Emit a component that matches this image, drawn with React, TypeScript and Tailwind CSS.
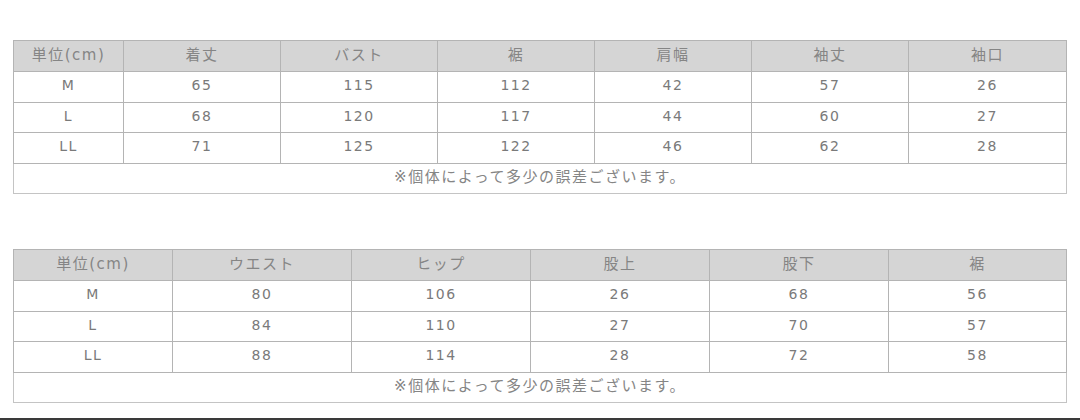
import React from 'react';

const NOTE = '※個体によって多少の誤差ございます。';

type TableProps = {
  head: string[];
  rows: (string | number)[][];
  cols: number[];
};

const SizeTable = ({ head, rows, cols }: TableProps) => {
  return (
    <table className="table-fixed border-collapse w-[1053px] border border-[#c4c4c4]">
      <colgroup>
        {cols.map((w, i) => (
          <col key={i} style={{ width: w }} />
        ))}
      </colgroup>
      <thead>
        <tr className="h-[31px] bg-[#d5d5d5]">
          {head.map((h, i) => (
            <th key={i} className="border border-[#b4b4b4] font-normal text-[#858585] p-0 pb-[2px] text-[15px]">
              {h}
            </th>
          ))}
        </tr>
      </thead>
      <tbody>
        {rows.map((r, ri) => (
          <tr key={ri} className={ri === 1 ? 'h-[30px]' : 'h-[31px]'}>
            {r.map((c, ci) => (
              <td key={ci} className="border border-[#b4b4b4] text-center text-[#7a7a7a] p-0 pb-[3px]">
                {c}
              </td>
            ))}
          </tr>
        ))}
        <tr className="h-[30px]">
          <td colSpan={head.length} className="border border-[#c4c4c4] text-center text-[#858585] p-0 pb-[2px] text-[15px]">
            {NOTE}
          </td>
        </tr>
      </tbody>
    </table>
  );
};

const App = () => {
  return (
    <div
      className="w-[1080px] h-[420px] bg-white flex flex-col text-[14px] tracking-[1.5px]"
      style={{ fontFamily: '"DejaVu Sans", "Noto Sans CJK JP", sans-serif' }}
    >
      <div className="pl-[13px] pt-[40px]">
        <SizeTable
          head={['単位(cm)', '着丈', 'バスト', '裾', '肩幅', '袖丈', '袖口']}
          cols={[110, 157, 157, 157, 157, 157, 158]}
          rows={[
            ['M', 65, 115, 112, 42, 57, 26],
            ['L', 68, 120, 117, 44, 60, 27],
            ['LL', 71, 125, 122, 46, 62, 28],
          ]}
        />
      </div>
      <div className="pl-[13px] pt-[55px]">
        <SizeTable
          head={['単位(cm)', 'ウエスト', 'ヒップ', '股上', '股下', '裾']}
          cols={[159, 179, 179, 179, 179, 178]}
          rows={[
            ['M', 80, 106, 26, 68, 56],
            ['L', 84, 110, 27, 70, 57],
            ['LL', 88, 114, 28, 72, 58],
          ]}
        />
      </div>
      <div className="mt-auto h-[2px] bg-[#3a3a3a]" />
    </div>
  );
};

export default App;
